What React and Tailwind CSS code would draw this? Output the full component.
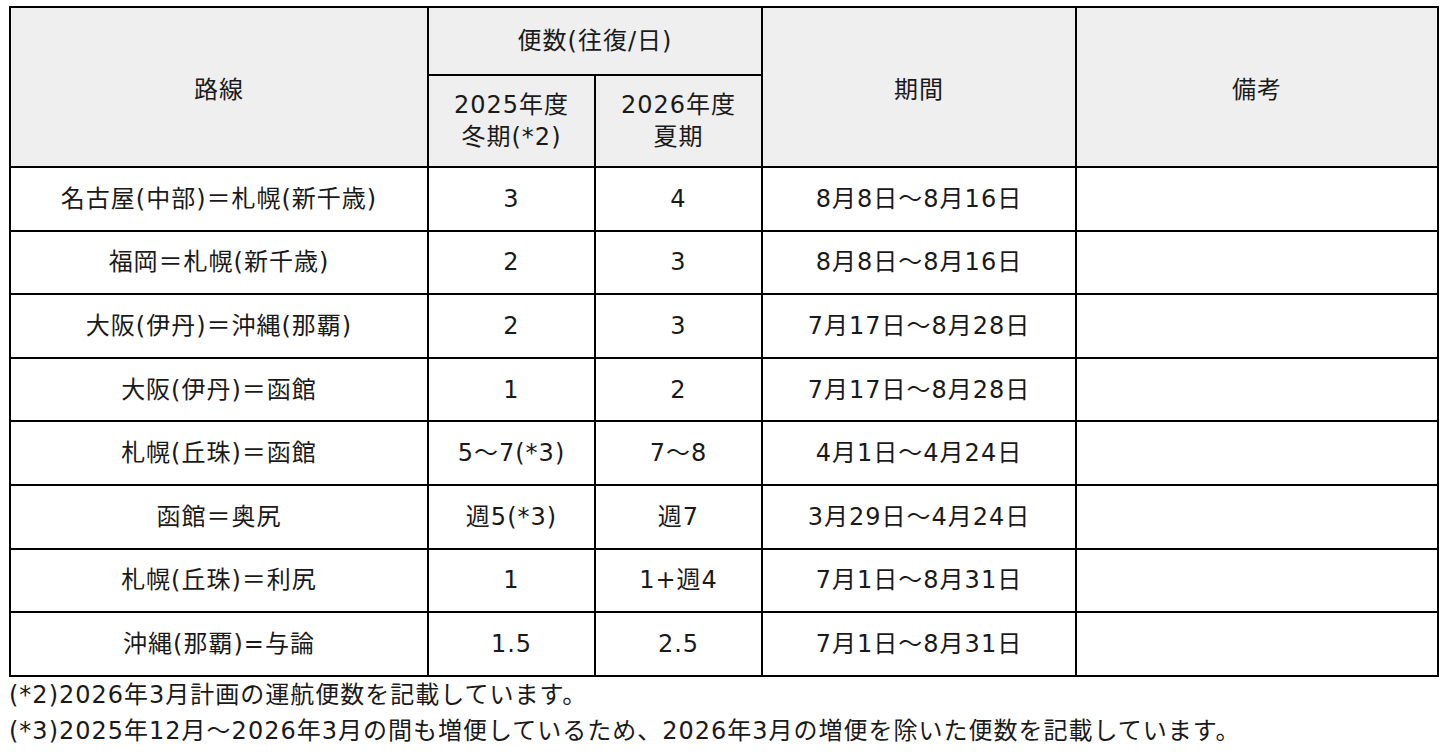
const rows = [
  { route: '名古屋(中部)＝札幌(新千歳)', winter: '3', summer: '4', period: '8月8日～8月16日' },
  { route: '福岡＝札幌(新千歳)', winter: '2', summer: '3', period: '8月8日～8月16日' },
  { route: '大阪(伊丹)＝沖縄(那覇)', winter: '2', summer: '3', period: '7月17日～8月28日' },
  { route: '大阪(伊丹)＝函館', winter: '1', summer: '2', period: '7月17日～8月28日' },
  { route: '札幌(丘珠)＝函館', winter: '5～7(*3)', summer: '7～8', period: '4月1日～4月24日' },
  { route: '函館＝奥尻', winter: '週5(*3)', summer: '週7', period: '3月29日～4月24日' },
  { route: '札幌(丘珠)＝利尻', winter: '1', summer: '1+週4', period: '7月1日～8月31日' },
  { route: '沖縄(那覇)=与論', winter: '1.5', summer: '2.5', period: '7月1日～8月31日' },
];

const cell = 'border-2 border-black text-center align-middle p-0';
const head = 'border-2 border-black text-center align-middle p-0 bg-[#efefef] font-normal';

export default function App() {
  return (
    <div className="bg-white min-h-screen text-[#1a1a1a] text-[24px] tracking-[1px] font-['DejaVu_Sans','Noto_Sans_CJK_JP',sans-serif]">
      <div className="pt-[6px] pl-[9px]">
        <table className="table-fixed border-collapse w-[1428px]">
          <colgroup>
            <col className="w-[418px]" />
            <col className="w-[167px]" />
            <col className="w-[167px]" />
            <col className="w-[314px]" />
            <col className="w-[362px]" />
          </colgroup>
          <thead>
            <tr className="h-[68px]">
              <th rowSpan={2} className={head + ' pt-[6px]'}>路線</th>
              <th colSpan={2} className={head}>便数(往復/日)</th>
              <th rowSpan={2} className={head + ' pt-[6px]'}>期間</th>
              <th rowSpan={2} className={head + ' pt-[6px]'}>備考</th>
            </tr>
            <tr className="h-[92px]">
              <th className={head + ' leading-[32px]'}>
                2025年度<br />冬期(*2)
              </th>
              <th className={head + ' leading-[32px]'}>
                2026年度<br />夏期
              </th>
            </tr>
          </thead>
          <tbody>
            {rows.map((r, i) => (
              <tr key={i} className="h-[63.6px]">
                <td className={cell}>{r.route}</td>
                <td className={cell}>{r.winter}</td>
                <td className={cell}>{r.summer}</td>
                <td className={cell}>{r.period}</td>
                <td className={cell}></td>
              </tr>
            ))}
          </tbody>
        </table>
      </div>
      <div className="pl-[9px] leading-[36px]">
        <p>(*2)2026年3月計画の運航便数を記載しています。</p>
        <p>(*3)2025年12月～2026年3月の間も増便しているため、2026年3月の増便を除いた便数を記載しています。</p>
      </div>
    </div>
  );
}
